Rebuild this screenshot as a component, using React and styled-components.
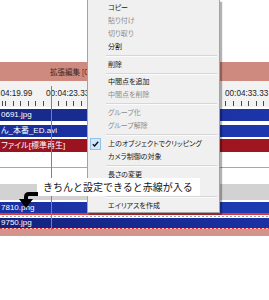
import React from 'react';
import styled, { createGlobalStyle } from 'styled-components';

const GlobalStyle = createGlobalStyle`
  html, body {
    margin: 0;
    padding: 0;
    background: #fff;
  }
  body {
    width: 269px;
    height: 300px;
    overflow: hidden;
    font-family: "Liberation Sans", "Noto Sans CJK JP", sans-serif;
  }
`;

const Page = styled.div`
  position: relative;
  width: 269px;
  height: 300px;
  overflow: hidden;
`;

const TopSpace = styled.div`
  height: 62px;
`;

const Timeline = styled.div`
  display: flex;
  flex-direction: column;
`;

const TitleBar = styled.div`
  height: 19px;
  background: #cf8a7f;
  display: flex;
  align-items: center;
  padding-left: 50px;
  font-family: "Noto Sans CJK JP", sans-serif;
  font-size: 7.5px;
  color: #3b2522;
  white-space: nowrap;
`;

const TimeBar = styled.div`
  height: 17px;
  background: #f2f2f2;
  display: flex;
  align-items: flex-start;
  padding-top: 8px;
  box-sizing: border-box;
  overflow: hidden;
`;

const TimeLabel = styled.span`
  flex: 0 0 ${p => p.$w}px;
  margin-left: ${p => p.$offset || 0}px;
  font-size: 8.2px;
  line-height: 9px;
  color: #1c1c1c;
  white-space: nowrap;
`;

const Ruler = styled.div`
  height: 9px;
  background: #f2f2f2;
  display: flex;
  align-items: flex-end;
  padding-bottom: 1px;
  box-sizing: border-box;
`;

const Ticks = styled.div`
  flex: 1;
  height: 5px;
  background: repeating-linear-gradient(to right, #4a4a4a 0 1px, transparent 1px 7.6px);
  background-position: 5px 0;
`;

const Layer = styled.div`
  height: ${p => p.$h}px;
  background: ${p => p.$bg || '#fff'};
  display: flex;
  flex-direction: column;
  padding-top: ${p => p.$pt || 0}px;
  box-sizing: border-box;
  border-bottom: ${p => (p.$line ? '1px solid #a8a8a8' : 'none')};
`;

const clipTones = {
  navy: 'linear-gradient(to right, #172886, #1c35aa)',
  blue: 'linear-gradient(to right, #1a2e9c, #1d38ae)',
  red: 'linear-gradient(to right, #981320, #a0161f)',
  bright: 'linear-gradient(to right, #1a2fa0, #1e3cb2)',
  dark: 'linear-gradient(to right, #14227c, #1a31a4)',
};

const Clip = styled.div`
  position: relative;
  height: ${p => p.$h}px;
  background: ${p => clipTones[p.$tone]};
  color: #fff;
  font-family: "Liberation Sans", "Noto Sans CJK JP", sans-serif;
  font-feature-settings: "palt";
  font-size: 8px;
  line-height: ${p => p.$h}px;
  padding-left: 1px;
  white-space: nowrap;
  overflow: hidden;

  &::after {
    content: '';
    position: absolute;
    left: 51px;
    top: 0;
    bottom: 0;
    width: 1px;
    background: ${p => (p.$tone === 'red' ? '#e77b7b' : '#1d8a86')};
  }
`;

const Gap = styled.div`
  height: ${p => p.$h}px;
  background: ${p => p.$bg || 'transparent'};
`;

const DotLine = styled.div`
  height: ${p => p.$h}px;
  background: ${p => p.$bg || '#fff'};
  background-image: repeating-linear-gradient(to right, ${p => p.$a} 0 2px, ${p => p.$b} 2px 4px);
  background-size: 100% ${p => p.$dot}px;
  background-repeat: no-repeat;
  background-position: 0 ${p => p.$at}px;
`;

const BottomBand = styled.div`
  height: 6px;
  background: #d3958b;
`;

const Playhead = styled.div`
  position: absolute;
  left: 51px;
  top: 86px;
  height: 144px;
  width: 1px;
  background: #e05a5a;
`;

const Menu = styled.div`
  position: absolute;
  left: 87px;
  top: 0;
  width: 131px;
  padding-top: 1px;
  background: #f0f0f0;
  border: 1px solid #a3a3a3;
  border-top: none;
  box-shadow: 2px 2px 1px rgba(0, 0, 0, 0.3);
  font-family: "Noto Sans CJK JP", sans-serif;
  font-feature-settings: "palt";
  font-size: 7px;
  z-index: 5;
`;

const Item = styled.div`
  position: relative;
  height: 13px;
  line-height: 13px;
  padding-left: 20px;
  color: ${p => (p.$disabled ? '#8c8c8c' : '#141414')};
  white-space: nowrap;
`;

const Separator = styled.div`
  height: ${p => p.$h || 5}px;
  display: flex;
  align-items: center;
  padding-left: 18px;
  padding-right: 2px;

  &::before {
    content: '';
    flex: 1;
    height: 1px;
    background: #d6d6d6;
    box-shadow: 0 1px 0 #fbfbfb;
  }
`;

const CheckBox = styled.span`
  position: absolute;
  left: 2px;
  top: 1px;
  width: 9px;
  height: 10px;
  border: 1px solid #8fc2ea;
  background: #d3e7f8;
  display: flex;
  align-items: center;
  justify-content: center;
`;

const Callout = styled.div`
  position: absolute;
  left: 37px;
  top: 178px;
  width: 157px;
  height: 18px;
  padding-left: 6px;
  background: #fff;
  font-family: "Noto Sans CJK JP", sans-serif;
  font-size: 10px;
  line-height: 18px;
  color: #151515;
  white-space: nowrap;
  z-index: 6;
`;

const Arrow = styled.svg`
  position: absolute;
  left: 17px;
  top: 189px;
  z-index: 7;
`;

const menuItems = [
  { t: 'コピー' },
  { t: '貼り付け', d: true },
  { t: '切り取り', d: true },
  { t: '分割' },
  { sep: 5 },
  { t: '削除' },
  { sep: 4 },
  { t: '中間点を追加' },
  { t: '中間点を削除', d: true },
  { sep: 5 },
  { t: 'グループ化', d: true },
  { t: 'グループ解除', d: true },
  { sep: 5 },
  { t: '上のオブジェクトでクリッピング', check: true },
  { t: 'カメラ制御の対象' },
  { sep: 5 },
  { t: '長さの変更' },
  { t: '' },
  { sep: 5 },
  { t: 'エイリアスを作成' },
];

export default function App() {
  return (
    <Page>
      <GlobalStyle />
      <TopSpace />
      <Timeline>
        <TitleBar>拡張編集 [00:04:23.33]</TitleBar>
        <TimeBar>
          <TimeLabel $w={57} $offset={-11}>00:04:19.99</TimeLabel>
          <TimeLabel $w={179}>00:04:23.33</TimeLabel>
          <TimeLabel $w={60}>00:04:33.33</TimeLabel>
        </TimeBar>
        <Ruler>
          <Ticks />
        </Ruler>
        <Layer $h={16} $pt={2}>
          <Clip $h={12} $tone="navy">0691.jpg</Clip>
        </Layer>
        <Layer $h={15} $pt={2}>
          <Clip $h={12} $tone="blue">ん_本番_ED.avi</Clip>
        </Layer>
        <Layer $h={15} $pt={1}>
          <Clip $h={13} $tone="red">ファイル[標準再生]</Clip>
        </Layer>
        <Layer $h={15} $line />
        <Layer $h={16} />
        <Layer $h={16} $bg="#d2d2d2" />
        <Layer $h={15} $pt={2}>
          <Clip $h={11} $tone="bright">7810.png</Clip>
          <Gap $h={2} $bg="#d63b3b" />
        </Layer>
        <DotLine $h={3} $a="#ffffff" $b="#9aa0b8" $dot={1} $at={1} />
        <Clip $h={10} $tone="dark">9750.jpg</Clip>
        <DotLine $h={2} $bg="#d3958b" $a="#e03a3a" $b="#f3c4c4" $dot={1} $at={0} />
        <BottomBand />
      </Timeline>

      <Playhead />

      <Menu>
        {menuItems.map((m, i) =>
          m.sep ? (
            <Separator key={i} $h={m.sep} />
          ) : (
            <Item key={i} $disabled={m.d}>
              {m.check && (
                <CheckBox>
                  <svg width="7" height="6" viewBox="0 0 7 6">
                    <path d="M0.8 3.2 L2.6 5 L6.2 0.8" fill="none" stroke="#111" strokeWidth="1.4" />
                  </svg>
                </CheckBox>
              )}
              {m.t}
            </Item>
          )
        )}
      </Menu>

      <Callout>きちんと設定できると赤線が入る</Callout>
      <Arrow width="21" height="20" viewBox="0 0 21 20">
        <path d="M21 5 H12 Q9 5 9 8 V10" fill="none" stroke="#000" strokeWidth="4" />
        <path d="M2 10 H16 L9 19 Z" fill="#000" />
      </Arrow>
    </Page>
  );
}
